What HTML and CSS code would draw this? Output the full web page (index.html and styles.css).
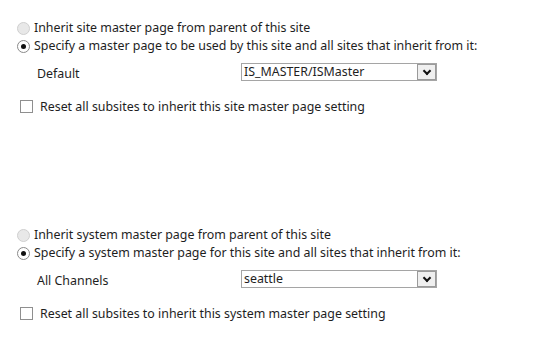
FILE: index.html
```html
<!DOCTYPE html>
<html lang="en">
<head>
    <meta charset="UTF-8" />
    <title>Master Page Settings</title>
    <link rel="stylesheet" href="styles.css">
</head>
<body>
    <div id="wrap">
        <section class="group">
            <label class="opt"><input type="radio" name="site" disabled />Inherit site master page from parent of this site</label>
            <label class="opt"><input type="radio" name="site" checked />Specify a master page to be used by this site and all sites that inherit from it:</label>
            <div class="field">
                <span class="name">Default</span>
                <div class="select"><span>IS_MASTER/ISMaster</span><i class="arrow"></i></div>
            </div>
            <label class="reset"><input type="checkbox" />Reset all subsites to inherit this site master page setting</label>
        </section>
        <section class="group">
            <label class="opt"><input type="radio" name="sys" disabled />Inherit system master page from parent of this site</label>
            <label class="opt"><input type="radio" name="sys" checked />Specify a system master page for this site and all sites that inherit from it:</label>
            <div class="field">
                <span class="name">All Channels</span>
                <div class="select"><span>seattle</span><i class="arrow"></i></div>
            </div>
            <label class="reset"><input type="checkbox" />Reset all subsites to inherit this system master page setting</label>
        </section>
    </div>
</body>
</html>
```
FILE: styles.css
```css
body{
    margin: 0;
    background: #fff;
    color: #1e1e1e;
    font: 12.4px "Noto Sans", "DejaVu Sans", sans-serif;
}
#wrap{
    padding: 19px 0 0 16px;
}
.group{
    margin-bottom: 111px;
}
.group:last-child{
    margin-bottom: 0;
}
.opt{
    display: flex;
    align-items: center;
    height: 18px;
    line-height: 18px;
}
.opt input{
    -webkit-appearance: none;
    appearance: none;
    width: 13px;
    height: 13px;
    margin: 0 4px 0 1px;
    border: 1px solid #8a8a8a;
    border-radius: 50%;
    background: #fff;
    box-sizing: border-box;
    display: flex;
    align-items: center;
    justify-content: center;
}
.opt input:disabled{
    border-color: #cfcfcf;
    background: #e8e8e8;
}
.opt input:checked::after{
    content: "";
    width: 5px;
    height: 5px;
    border-radius: 50%;
    background: #111;
}
.field{
    display: flex;
    height: 18px;
    margin: 8px 0 0 21px;
}
.name{
    width: 204px;
    line-height: 16px;
    margin-top: 3px;
}
.select{
    width: 196px;
    height: 18px;
    border: 1px solid #a5a5a5;
    box-sizing: border-box;
    display: flex;
    align-items: center;
    justify-content: space-between;
    padding-left: 2px;
    line-height: 16px;
}
.arrow{
    width: 19px;
    height: 16px;
    box-sizing: border-box;
    border: 1px solid #9a9a9a;
    background: #efefef;
    position: relative;
}
.arrow::after{
    content: "";
    position: absolute;
    left: 6px;
    top: 3px;
    width: 4px;
    height: 4px;
    border-right: 2px solid #111;
    border-bottom: 2px solid #111;
    transform: rotate(45deg);
}
.reset{
    display: flex;
    align-items: center;
    height: 18px;
    margin: 16px 0 0 4px;
}
.reset input{
    -webkit-appearance: none;
    appearance: none;
    width: 13px;
    height: 13px;
    margin: 0 7px 0 0;
    border: 1px solid #8f8f8f;
    background: #fff;
}
```
